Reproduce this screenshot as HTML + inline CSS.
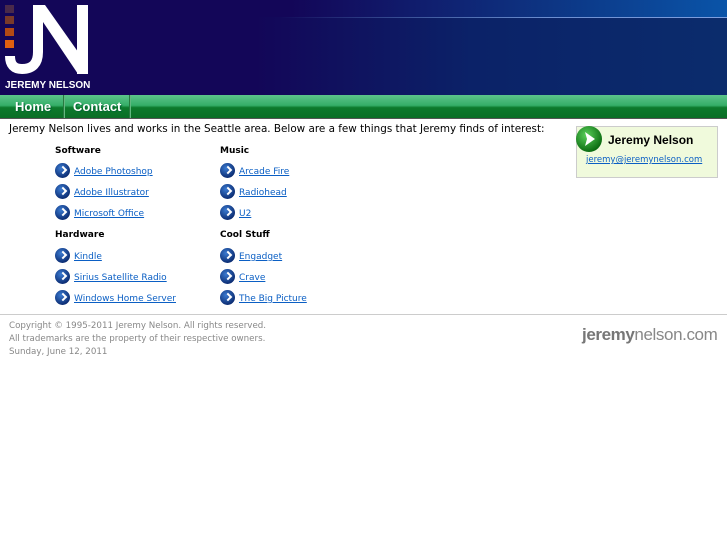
<!DOCTYPE html>
<html><head><style>
body{margin:0;width:727px;height:545px;background:#fff;font-family:"DejaVu Sans",sans-serif;position:relative;overflow:hidden}
.hdr{position:absolute;left:0;top:0;width:727px;height:95px;background:linear-gradient(90deg,#130658 0%,#130658 35%,#0b2268 65%,#0b2c6c 100%)}
.band{position:absolute;left:0;top:0;width:727px;height:17px;background:linear-gradient(90deg,#130658 0%,#130658 40%,#0d3482 75%,#0a54a8 100%)}
.line{position:absolute;left:280px;top:17px;width:447px;height:1px;background:linear-gradient(90deg,rgba(120,150,220,0),#6c8ed0 60%,#7fa0e0)}
.nav{position:absolute;left:0;top:95px;width:727px;height:23px;background:linear-gradient(#5cc48a 0%,#35ae68 45%,#0c7a2c 55%,#0a6e26 100%);border-bottom:1px solid #555}
.nav span{position:absolute;top:4px;height:19px;line-height:19px;color:#fff;font:bold 13px "Liberation Sans",sans-serif;text-shadow:1px 1px 1px #063;}
.sep{position:absolute;top:0;width:2px;height:23px;background:linear-gradient(90deg,#0a5a20,#7fd8a0)}
a{color:#0b5fc4;text-decoration:underline}
.t{position:absolute;font-size:9px}
.h{position:absolute;font-size:9px;font-weight:bold;color:#000}
.li{position:absolute;font-size:9px;height:16px;line-height:16px}
.ic{display:inline-block;width:15px;height:15px;border-radius:50%;background:radial-gradient(circle at 40% 35%,#3a7ad0,#0a2a70 75%);vertical-align:middle;margin-right:4px;position:relative;top:-1px}
.ic:after{content:"";position:absolute;left:5px;top:4px;width:4px;height:4px;border-right:2.5px solid #fff;border-bottom:2.5px solid #fff;transform:rotate(-45deg)}
</style></head><body>
<div class="hdr"></div><div class="band"></div><div class="line"></div>
<svg style="position:absolute;left:0;top:0" width="100" height="95">
<rect x="5" y="5" width="9" height="8" fill="#4a2a4a"/>
<rect x="5" y="16" width="9" height="8" fill="#7a3a2a"/>
<rect x="5" y="28" width="9" height="8" fill="#b24a14"/>
<rect x="5" y="40" width="9" height="8" fill="#e06010"/>
<path d="M38 5 V52 Q38 69 22 69 Q10 69 10 56" fill="none" stroke="#fff" stroke-width="10"/>
<polygon points="33,5 45,5 88,66 88,74 78,74 43,22" fill="#fff"/>
<rect x="77" y="5" width="11" height="69" fill="#fff"/>
<text x="5" y="88" fill="#fff" font-family="Liberation Sans" font-size="10" font-weight="bold">JEREMY NELSON</text>
</svg>
<div class="nav"><span style="left:15px">Home</span><div class="sep" style="left:63px"></div><span style="left:73px">Contact</span><div class="sep" style="left:129px"></div></div>
<div class="t" style="left:9px;top:123px;font-size:10.4px">Jeremy Nelson lives and works in the Seattle area. Below are a few things that Jeremy finds of interest:</div>
<div style="position:absolute;left:576px;top:126px;width:140px;height:50px;background:#f0fadc;border:1px solid #ccc"></div>
<div style="position:absolute;left:576px;top:126px;width:26px;height:26px;border-radius:50%;background:radial-gradient(circle at 40% 35%,#5ad05a,#0a6a10 75%)"><svg width="26" height="26"><path d="M9 6 L19 13 L9 20 L11 13 Z" fill="#fff"/></svg></div>
<div style="position:absolute;left:608px;top:133px;font:bold 12px 'Liberation Sans',sans-serif">Jeremy Nelson</div>
<div class="t" style="left:586px;top:155px;font-size:8.5px"><a>jeremy@jeremynelson.com</a></div>
<div class="h" style="left:55px;top:146px">Software</div>
<div class="h" style="left:220px;top:146px">Music</div>
<div class="li" style="left:55px;top:164px"><span class="ic"></span><a>Adobe Photoshop</a></div>
<div class="li" style="left:55px;top:185px"><span class="ic"></span><a>Adobe Illustrator</a></div>
<div class="li" style="left:55px;top:206px"><span class="ic"></span><a>Microsoft Office</a></div>
<div class="li" style="left:220px;top:164px"><span class="ic"></span><a>Arcade Fire</a></div>
<div class="li" style="left:220px;top:185px"><span class="ic"></span><a>Radiohead</a></div>
<div class="li" style="left:220px;top:206px"><span class="ic"></span><a>U2</a></div>
<div class="h" style="left:55px;top:230px">Hardware</div>
<div class="h" style="left:220px;top:230px">Cool Stuff</div>
<div class="li" style="left:55px;top:249px"><span class="ic"></span><a>Kindle</a></div>
<div class="li" style="left:55px;top:270px"><span class="ic"></span><a>Sirius Satellite Radio</a></div>
<div class="li" style="left:55px;top:291px"><span class="ic"></span><a>Windows Home Server</a></div>
<div class="li" style="left:220px;top:249px"><span class="ic"></span><a>Engadget</a></div>
<div class="li" style="left:220px;top:270px"><span class="ic"></span><a>Crave</a></div>
<div class="li" style="left:220px;top:291px"><span class="ic"></span><a>The Big Picture</a></div>
<div style="position:absolute;left:0;top:314px;width:727px;height:1px;background:#ccc"></div>
<div class="t" style="left:9px;top:320px;color:#888;line-height:13px;font-size:8.7px">Copyright © 1995-2011 Jeremy Nelson. All rights reserved.<br>All trademarks are the property of their respective owners.<br>Sunday, June 12, 2011</div>
<div style="position:absolute;left:582px;top:325px;font:17px 'Liberation Sans',sans-serif;color:#888;letter-spacing:-0.4px"><b style="color:#777">jeremy</b>nelson.com</div>
</body></html>
